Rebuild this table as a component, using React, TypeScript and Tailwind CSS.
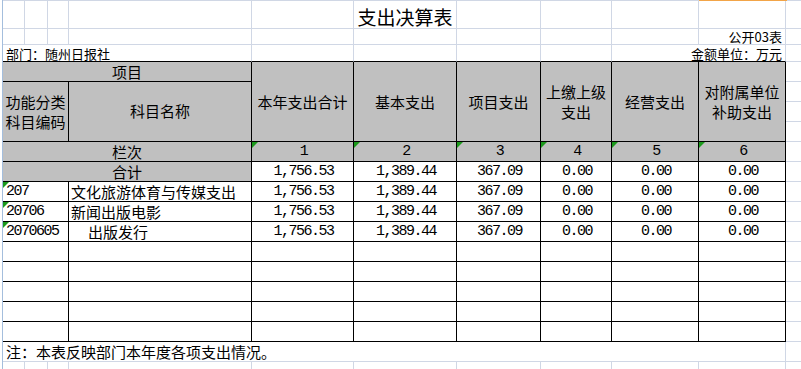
import React from 'react';

const GRID = 'border-[#d0d7e5]';
const GRAY = 'bg-[#c0c0c0]';
const MONO = "font-['Liberation_Mono',monospace] text-[15px] tracking-[-1.5px]";

// Excel columns A..J, widths include the 1px right line
const W = ['w-[22px]', 'w-[23px]', 'w-[21px]', 'w-[183px]', 'w-[102px]', 'w-[103px]', 'w-[84px]', 'w-[71px]', 'w-[87px]', 'w-[87px]'];
const VALUE_W = W.slice(4);

const heads = ['本年支出合计', '基本支出', '项目支出', '上缴上级\n支出', '经营支出', '对附属单位\n补助支出'];
const values = ['1,756.53', '1,389.44', '367.09', '0.00', '0.00', '0.00'];

const rows = [
  { code: '207', name: '文化旅游体育与传媒支出', indent: false },
  { code: '20706', name: '新闻出版电影', indent: false },
  { code: '2070605', name: '出版发行', indent: true },
];

function Tri() {
  return <span className="absolute left-0 top-0 h-0 w-0 border-r-[6px] border-t-[6px] border-r-transparent border-t-[#1c9a1c]" />;
}

function Spare({ h = 'h-full' }: { h?: string }) {
  return <div className={`${h} w-[15px] shrink-0 border-b ${GRID}`} />;
}

function ValueCells({ gray = false, items }: { gray?: boolean; items: string[] }) {
  return (
    <>
      {items.map((v, i) => (
        <div
          key={i}
          className={`${VALUE_W[i]} relative flex shrink-0 items-center justify-center border-b border-r border-black ${gray ? GRAY : ''}`}
        >
          {gray && <Tri />}
          <span className={`${MONO} pl-[2px]`}>{v}</span>
        </div>
      ))}
    </>
  );
}

export default function App() {
  return (
    <div className="flex h-[369px] w-[801px] overflow-hidden bg-white font-['Noto_Sans_CJK_SC',sans-serif] text-black">
      <div className="w-[2px] shrink-0" />
      <div className="w-px shrink-0 bg-[#a4bedd]" />
      <div className="flex w-[798px] shrink-0 flex-col">
        {/* top line */}
        <div className="flex h-px shrink-0">
          <div className="w-[696px] bg-[#d0d7e5]" />
          <div className="w-[88px] bg-[#f2a447]" />
          <div className="flex-1 bg-[#d0d7e5]" />
        </div>

        {/* title */}
        <div className="flex h-[28px] shrink-0">
          {W.map((w, i) => (
            <div key={i} className={`${w} flex shrink-0 items-end justify-center border-b border-r pb-[2px] ${GRID}`}>
              {i === 5 && <span className="whitespace-nowrap text-[19px] leading-none">支出决算表</span>}
            </div>
          ))}
          <Spare />
        </div>

        {/* form number */}
        <div className="flex h-[16px] shrink-0">
          {W.map((w, i) => (
            <div key={i} className={`${w} flex shrink-0 items-center justify-end border-b border-r pr-[3px] ${GRID}`}>
              {i === 9 && <span className="whitespace-nowrap text-[13px] leading-[13px]">公开03表</span>}
            </div>
          ))}
          <Spare />
        </div>

        {/* department / unit */}
        <div className="flex h-[17px] shrink-0 text-[13px] leading-[13px]">
          <div className={`flex w-[249px] shrink-0 items-center border-b border-r border-b-black pl-[3px] ${GRID}`}>
            <span className="whitespace-nowrap">部门：随州日报社</span>
          </div>
          {W.slice(4, 8).map((w, i) => (
            <div key={i} className={`${w} shrink-0 border-b border-r border-b-black ${GRID}`} />
          ))}
          <div className={`flex w-[174px] shrink-0 items-center justify-end border-b border-r border-b-black pr-[3px] ${GRID}`}>
            <span className="whitespace-nowrap">金额单位：万元</span>
          </div>
          <Spare />
        </div>

        {/* table header */}
        <div className="flex h-[80px] shrink-0 text-[15px]">
          <div className="flex w-[249px] shrink-0 flex-col">
            <div className={`flex h-[20px] shrink-0 items-center justify-center border-b border-r border-black leading-none ${GRAY}`}>
              项目
            </div>
            <div className="flex flex-1">
              <div className={`flex w-[66px] shrink-0 items-center justify-center border-b border-r border-black text-center leading-[20px] ${GRAY}`}>
                功能分类
                <br />
                科目编码
              </div>
              <div className={`flex w-[183px] shrink-0 items-center justify-center border-b border-r border-black ${GRAY}`}>
                科目名称
              </div>
            </div>
          </div>
          {heads.map((h, i) => (
            <div
              key={i}
              className={`${VALUE_W[i]} flex shrink-0 items-center justify-center whitespace-pre-line border-b border-r border-black text-center leading-[20px] ${GRAY}`}
            >
              {h}
            </div>
          ))}
          <div className="flex w-[15px] shrink-0 flex-col">
            <Spare h="h-[20px]" />
            <Spare h="h-[20px]" />
            <Spare h="h-[20px]" />
            <Spare h="h-[20px]" />
          </div>
        </div>

        {/* column numbers */}
        <div className="flex h-[20px] shrink-0 text-[15px] leading-none">
          <div className={`flex w-[249px] shrink-0 items-center justify-center border-b border-r border-black ${GRAY}`}>栏次</div>
          <ValueCells gray items={['1', '2', '3', '4', '5', '6']} />
          <Spare />
        </div>

        {/* total */}
        <div className="flex h-[20px] shrink-0 text-[15px] leading-none">
          <div className={`flex w-[249px] shrink-0 items-center justify-center border-b border-r border-black ${GRAY}`}>合计</div>
          <ValueCells items={values} />
          <Spare />
        </div>

        {rows.map((r) => (
          <div key={r.code} className="flex h-[20px] shrink-0 text-[15px] leading-none">
            <div className="relative flex w-[66px] shrink-0 items-center border-b border-r border-black pl-[3px]">
              <Tri />
              <span className={MONO}>{r.code}</span>
            </div>
            <div className={`flex w-[183px] shrink-0 items-center whitespace-nowrap border-b border-r border-black ${r.indent ? 'pl-[19px]' : 'pl-[2px]'}`}>
              {r.name}
            </div>
            <ValueCells items={values} />
            <Spare />
          </div>
        ))}

        {[0, 1, 2, 3, 4].map((n) => (
          <div key={n} className="flex h-[20px] shrink-0">
            <div className="w-[66px] shrink-0 border-b border-r border-black" />
            <div className="w-[183px] shrink-0 border-b border-r border-black" />
            {VALUE_W.map((w, i) => (
              <div key={i} className={`${w} shrink-0 border-b border-r border-black`} />
            ))}
            <Spare />
          </div>
        ))}

        {/* note */}
        <div className="flex h-[20px] shrink-0">
          <div className={`flex w-[783px] shrink-0 items-center border-b border-r pl-[3px] text-[15px] leading-none ${GRID}`}>
            注：本表反映部门本年度各项支出情况。
          </div>
          <Spare />
        </div>

        <div className="flex flex-1">
          {W.map((w, i) => (
            <div key={i} className={`${w} shrink-0 border-r ${GRID}`} />
          ))}
        </div>
      </div>
    </div>
  );
}
